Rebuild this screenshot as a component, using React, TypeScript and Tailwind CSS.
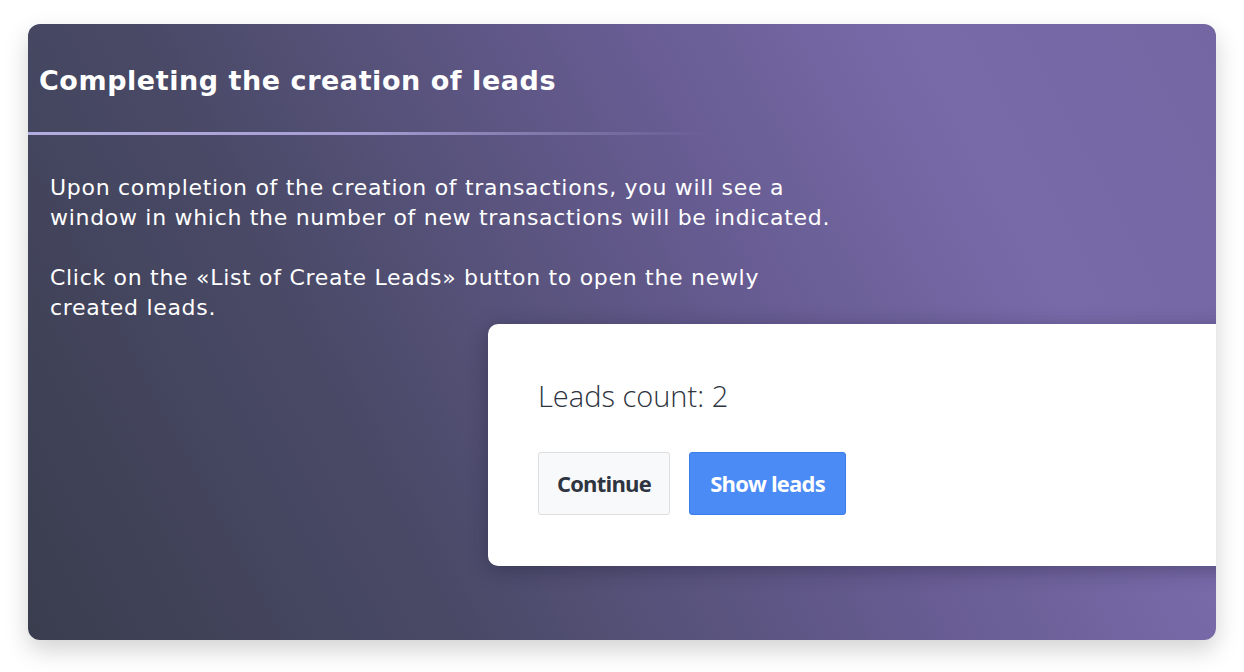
export default function App() {
  return (
    <div className="w-[1244px] h-[672px] bg-white pt-6 px-7 font-['DejaVu_Sans',sans-serif]">
      <div className="relative h-[616px] overflow-hidden rounded-xl bg-[linear-gradient(62deg,#3a3d4e_0%,#4a4a68_30%,#675c92_60%,#786aa9_80%,#7466a2_100%)] shadow-[0_10px_24px_rgba(0,0,0,0.18)]">
        <h1 className="pl-[11px] pt-[39px] text-[27px] font-bold leading-9 tracking-[0.55px] text-white">
          Completing the creation of leads
        </h1>
        <div className="mt-[33px] h-[3px] w-[680px] bg-[linear-gradient(90deg,#b4aee0_0%,#a59cd3_50%,rgba(165,156,211,0)_100%)]" />
        <div className="pl-[22px] pt-[38px] text-[22px] leading-[30px] tracking-[0.7px] text-white">
          <p>Upon completion of the creation of transactions, you will see a</p>
          <p>window in which the number of new transactions will be indicated.</p>
          <p className="mt-[30px]">Click on the «List of Create Leads» button to open the newly</p>
          <p>created leads.</p>
        </div>
        <div className="absolute left-[460px] top-[300px] h-[242px] w-[760px] rounded-[10px] bg-white pl-[50px] pt-[52px] shadow-[0_4px_20px_rgba(20,20,40,0.35)] font-['Open_Sans',sans-serif]">
          <div className="text-[29px] font-light leading-10 text-[#2e3440]">Leads count: 2</div>
          <div className="mt-[36px] flex gap-[19px]">
            <button className="h-[63px] w-[132px] rounded-[3px] border border-[#dedede] bg-[#f8f9fa] text-[22px] font-bold tracking-[-0.8px] text-[#2e3440]">
              Continue
            </button>
            <button className="h-[63px] w-[157px] rounded-[3px] border border-[#3d7de8] bg-[#4b8bf5] text-[22px] font-bold tracking-[-0.8px] text-white">
              Show leads
            </button>
          </div>
        </div>
      </div>
    </div>
  );
}
